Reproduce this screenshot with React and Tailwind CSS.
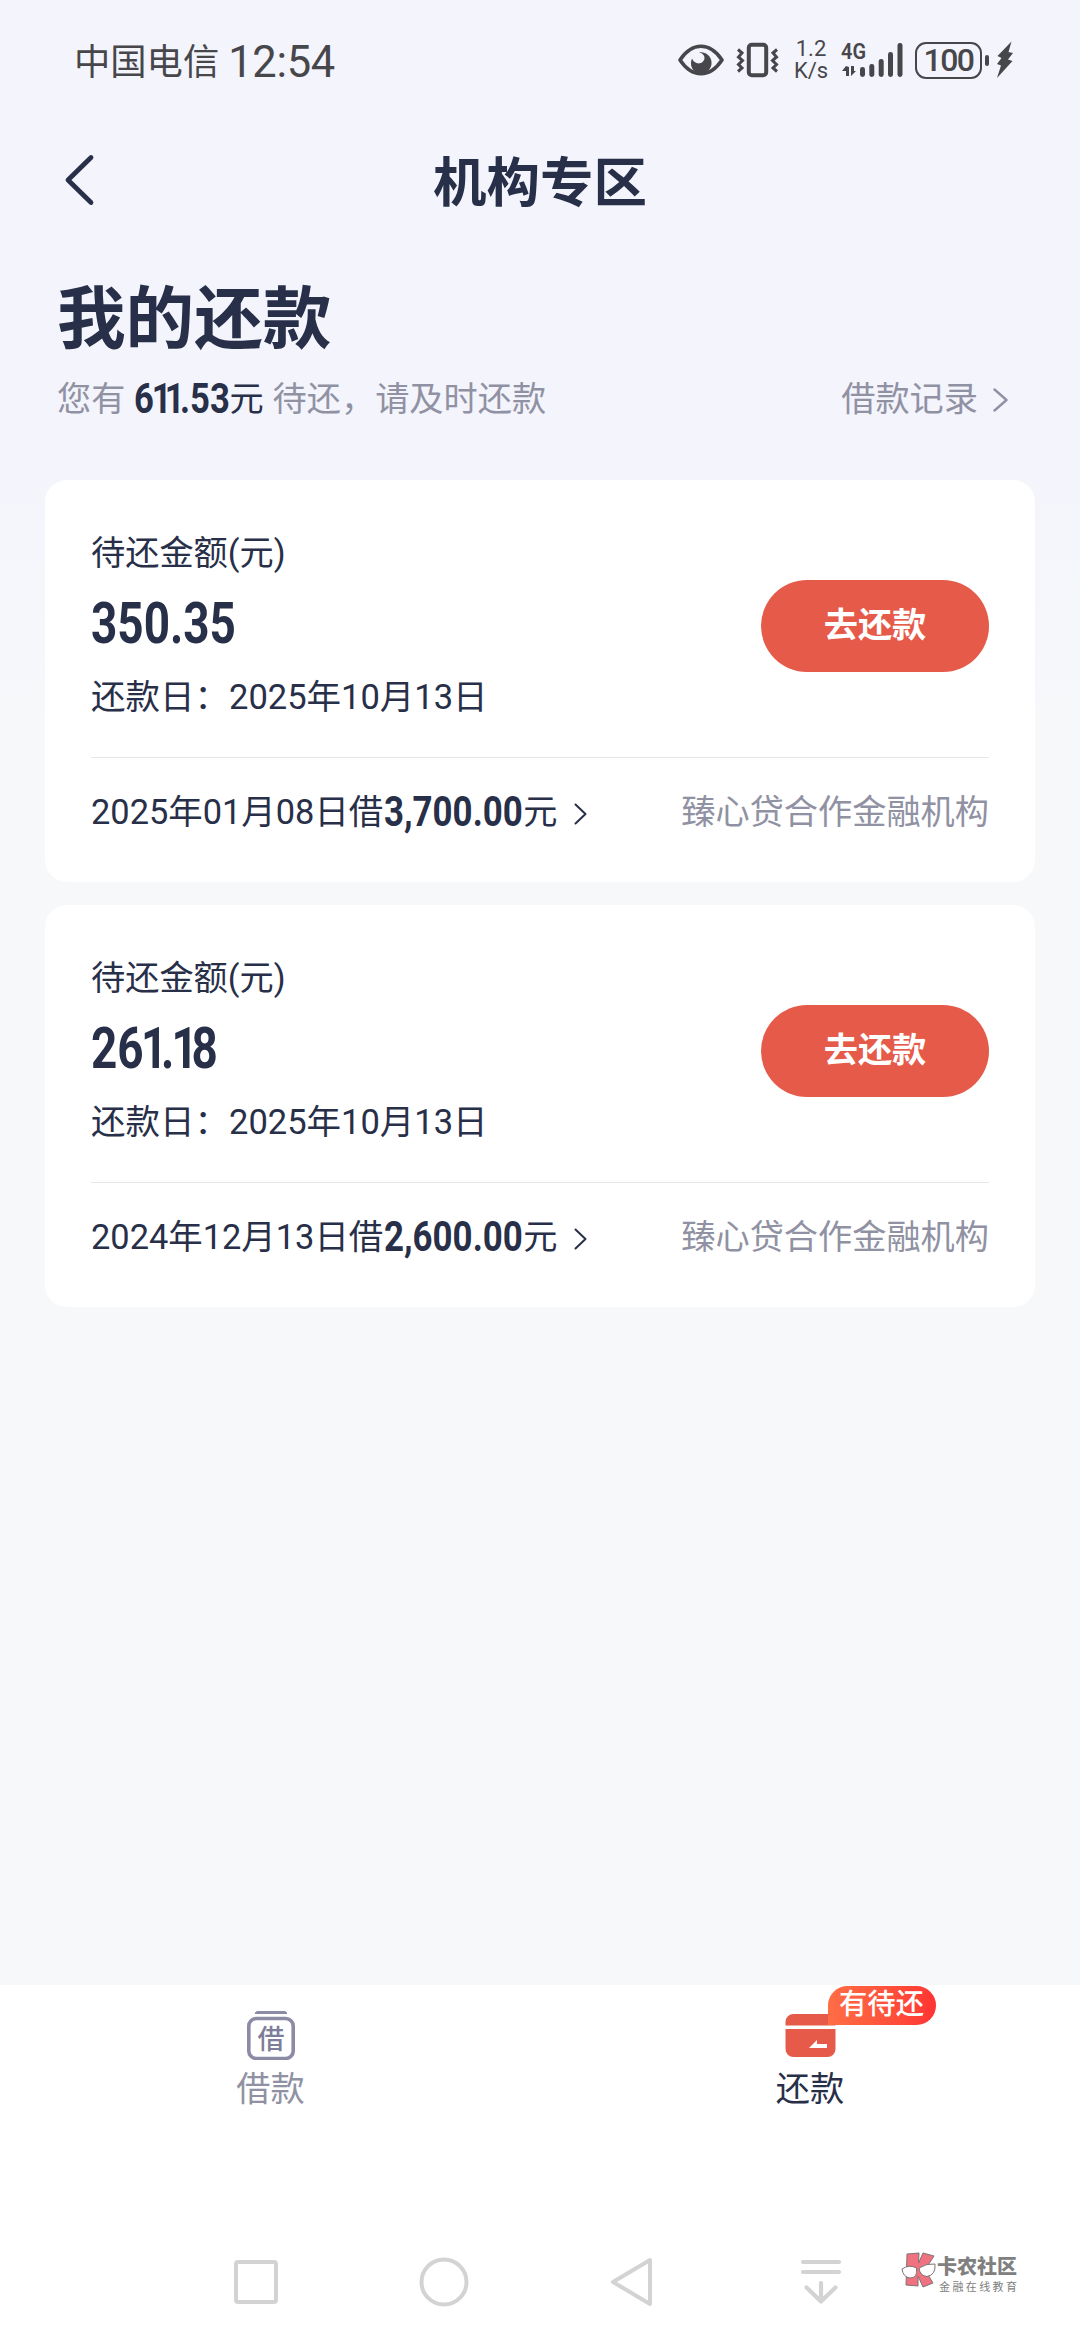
function Chevron({ w, h, color, stroke }) {
  return (
    <svg width={w} height={h} viewBox={`0 0 ${w} ${h}`} fill="none" stroke={color} strokeWidth={stroke} strokeLinecap="round" strokeLinejoin="round">
      <path d={`M1.5 1.5 L${w - 1.5} ${h / 2} L1.5 ${h - 1.5}`} />
    </svg>
  );
}

// Condensed bold figures; the digit 1 is set tighter than the others.
function Figures({ value, className }) {
  const spacing = (i) => {
    if (value[i] === "1") return value[i + 1] === "1" ? "tracking-[-0.197em]" : "tracking-[-0.137em]";
    return value[i + 1] === "1" ? "tracking-[-0.06em]" : "";
  };
  return (
    <span className={`inline-block origin-left whitespace-nowrap font-bold ${className}`}>
      {value.split("").map((ch, i) => (
        <span key={i} className={spacing(i)}>{ch}</span>
      ))}
    </span>
  );
}

function StatusBar() {
  const c = "#47474b";
  return (
    <div className="flex h-[120px] items-center pl-[74px] pr-[66px] text-[#47474b]">
      <span className="pt-[5px] text-[36.3px] leading-[60px]">中国电信</span>
      <span className="ml-[9px] pt-[5px] text-[43.5px] leading-[60px] tracking-[-0.3px]">12:54</span>
      <div className="ml-auto flex items-center">
        <svg width="46" height="32" viewBox="0 0 46 32">
          <path d="M2 16C8 7 15 2.300 23 2.300S38 7 44 16C38 25 31 29.700 23 29.700S8 25 2 16Z" fill="none" stroke={c} strokeWidth="3.600" strokeLinejoin="round" />
          <path d="M21 8.500C27 9.500 28 15 24.500 18C21 21 15.500 19 14 14.500C11 21 14.500 29 23 29C30 29 34 24 33.500 18C33 11.500 27 7.500 21 8.500Z" fill={c} />
        </svg>
        <svg className="ml-[12px]" width="43" height="36" viewBox="0 0 43 36" fill="none" stroke={c}>
          <rect x="12.800" y="2.800" width="17.400" height="30.400" rx="3" strokeWidth="4" />
          <path d="M2 7.500 L6 11 L2.500 15 L6.500 18.500 L2.500 22.500 L6 26 L2 29.500 M41 7.500 L37 11 L40.500 15 L36.500 18.500 L40.500 22.500 L37 26 L41 29.500" strokeWidth="3" />
        </svg>
        <div className="ml-[15px] flex w-[34px] flex-col items-center text-[22px] leading-[22px]">
          <span>1.2</span>
          <span>K/s</span>
        </div>
        <div className="ml-[13px] flex h-[36px] w-[63px]">
          <svg className="overflow-visible" width="63" height="36" viewBox="0 0 63 36" fill={c}>
            <text x="0" y="17" fontSize="22" fontWeight="600" fontFamily="Roboto" textLength="25" lengthAdjust="spacingAndGlyphs">4G</text>
            <path d="M5 25V34H8V25L5 24L1 29H5ZM10 24V34L15 29H13V24Z" />
            <rect x="19" y="25" width="5" height="10" rx="2.400" />
            <rect x="28.300" y="22" width="5" height="13" rx="2.400" />
            <rect x="37.700" y="17" width="5" height="18" rx="2.400" />
            <rect x="47" y="10" width="5" height="25" rx="2.400" />
            <rect x="56.500" y="1" width="5" height="34" rx="2.400" />
          </svg>
        </div>
        <div className="ml-[11px] flex h-[37px] w-[67px] items-center justify-center rounded-[11px] border-[2.500px] border-[#47474b]">
          <span className="text-[32px] font-medium leading-none tracking-[-1.500px]">100</span>
        </div>
        <div className="ml-[3px] h-[11px] w-[4px] rounded-full bg-[#47474b]" />
        <svg className="ml-[7px]" width="18" height="38" viewBox="0 0 18 38" fill={c}>
          <path d="M15.500 0.500L1.500 15L5.500 17L1 23L5 24.500L1 37L16.500 20L12 18.500L17 12L12.500 11Z" />
        </svg>
      </div>
    </div>
  );
}

function LoanCard({ amount, date, principal }) {
  return (
    <section className="flex h-[402px] flex-col rounded-[22px] bg-white px-[46px]">
      <div className="flex h-[278px] items-center justify-between border-b border-[#e6e7ea]">
        <div className="flex flex-col pt-[12px]">
          <span className="text-[34.200px] leading-[52px]">待还金额(元)</span>
          <span className="mb-[8px] mt-[6px] flex h-[78px] items-center text-[57px] leading-none">
            <Figures value={amount} className="scale-x-[0.805]" />
          </span>
          <span className="text-[34.500px] leading-[52px]">还款日：2025年10月13日</span>
        </div>
        <button className="mt-[15px] h-[92px] w-[228px] rounded-full bg-[#e65a49] text-[34.200px] font-bold text-white">去还款</button>
      </div>
      <div className="flex h-[107px] items-center text-[34.200px] leading-[52px]">
        <span className="text-[34.400px]">{date}</span>
        <span className="ml-px flex w-[139px] items-center text-[42px] leading-[52px]">
          <Figures value={principal} className="scale-x-[0.83]" />
        </span>
        <span>元</span>
        <span className="ml-[17px] pt-[5px]"><Chevron w={13} h={22} color="#282f48" stroke={2} /></span>
        <span className="ml-auto text-[#9092a3]">臻心贷合作金融机构</span>
      </div>
    </section>
  );
}

function BottomTabs() {
  return (
    <nav className="grid h-[240px] grid-cols-2 bg-white text-[34.200px] leading-[50px]">
      <div className="flex flex-col items-center pl-px pt-[24px] text-[#9092a3]">
        <svg width="50" height="51" viewBox="0 0 50 51" fill="none">
          <path d="M9 3.500L11 2H39L41 3.500V5H9Z" fill="#8c8ba5" />
          <rect x="2.800" y="9.500" width="44.400" height="40" rx="7.500" stroke="#8c8ba5" strokeWidth="3.600" />
          <text x="25" y="39.500" fontSize="27" fontWeight="500" fill="#7d7e99" textAnchor="middle" fontFamily="Noto Sans CJK SC">借</text>
        </svg>
        <span className="mt-[4px]">借款</span>
      </div>
      <div className="flex flex-col items-center pt-[24px]">
        <div className="relative">
          <svg width="51" height="51" viewBox="0 0 51 51" fill="#e65a49">
            <path d="M0.500 16.500V13A8 8 0 0 1 8.500 5H42.500A8 8 0 0 1 50.500 13V16.500Z" />
            <path d="M0.500 20H50.500V40A8 8 0 0 1 42.500 48H8.500A8 8 0 0 1 0.500 40Z" />
            <path d="M24 39L32 31V35H42V39Z" fill="white" />
          </svg>
          <span className="absolute -top-[23px] left-[43px] flex h-[39px] w-[108px] items-center justify-center rounded-[20px] rounded-bl-none bg-gradient-to-r from-[#ff6d45] to-[#ff3333] text-[28.300px] font-medium leading-none text-white">有待还</span>
        </div>
        <span className="mt-[4px]">还款</span>
      </div>
    </nav>
  );
}

function SystemNav() {
  return (
    <div className="flex h-[115px] items-start bg-white pl-[232px] pt-[30px]">
      <svg width="48" height="54" viewBox="0 0 48 54" fill="none" stroke="#d3d3d3" strokeWidth="4">
        <rect x="4" y="7" width="40" height="40" rx="2" />
      </svg>
      <svg className="ml-[139px]" width="50" height="54" viewBox="0 0 50 54" fill="none" stroke="#d3d3d3" strokeWidth="4">
        <circle cx="25" cy="27" r="22.500" />
      </svg>
      <svg className="ml-[139px]" width="48" height="54" viewBox="0 0 48 54" fill="none" stroke="#d3d3d3" strokeWidth="4" strokeLinejoin="round">
        <path d="M5 27L42 5V49Z" />
      </svg>
      <svg className="ml-[141px]" width="48" height="54" viewBox="0 0 48 54" fill="none" stroke="#d3d3d3" strokeWidth="4.200" strokeLinecap="round" strokeLinejoin="round">
        <path d="M6 7H42M6 17H42M24 28V46M9.500 32.500L24 46.500L38.500 32.500" />
      </svg>
      <svg className="-mt-[5px] ml-[56px]" width="36" height="40" viewBox="0 0 36 40" stroke="#7d7476" strokeWidth="1">
        <path d="M6 4L18 3L17.500 13L22 3L33 6L24 20L32 33L22 37L17 26V36L5 35Z" fill="#f0717f" />
        <path d="M1 19Q8 14 15.500 18Q17 28 9 28Q2 27 1 19ZM18 18Q26 13 34 14Q35 25 26 26.500Q19 26 18 18Z" fill="white" />
      </svg>
      <div className="flex flex-col text-[#808080]">
        <span className="text-[20px] font-black leading-[24px]">卡农社区</span>
        <span className="ml-[2px] mt-[2px] text-[11px] leading-[14px] tracking-[2.400px]">金融在线教育</span>
      </div>
    </div>
  );
}

export default function App() {
  return (
    <div className="flex h-[2340px] w-[1080px] flex-col overflow-hidden bg-[#f7f8fa] font-['Roboto','Noto_Sans_CJK_SC',sans-serif] text-[#282f48]" lang="zh-CN">
      <div className="flex flex-1 flex-col bg-gradient-to-b from-[#f3f4fc] from-[20%] to-[#f7f8fa] to-[36%]">
        <StatusBar />
        <header className="grid h-[120px] grid-cols-[1fr_auto_1fr] items-center px-[64px]">
          <svg width="32" height="54" viewBox="0 0 32 54" fill="none" stroke="#282f48" strokeWidth="4.800" strokeLinecap="round" strokeLinejoin="round">
            <path d="M27 4.500L4 27L27 49.500" />
          </svg>
          <h1 className="pt-[7px] text-[53.500px] font-bold leading-[80px]">机构专区</h1>
        </header>
        <div className="px-[57px] pt-[28px]">
          <h2 className="text-[68.600px] font-bold leading-[104px]">我的还款</h2>
          <div className="mt-[1px] flex items-center text-[34.200px] leading-[52px] text-[#9092a3]">
            <span>您有</span>
            <span className="ml-[9px] flex w-[95px] items-center text-[42px] text-[#282f48]">
              <Figures value="611.53" className="scale-x-[0.825]" />
            </span>
            <span className="text-[#282f48]">元</span>
            <span className="ml-[9px]">待还，请及时还款</span>
            <span className="ml-auto mr-[15px]">借款记录</span>
            <span className="mr-[15px] pt-[2px]"><Chevron w={15} h={24} color="#9092a3" stroke={2.4} /></span>
          </div>
        </div>
        <main className="mt-[55px] flex flex-col gap-[23px] px-[45px]">
          <LoanCard amount="350.35" date="2025年01月08日借" principal="3,700.00" />
          <LoanCard amount="261.18" date="2024年12月13日借" principal="2,600.00" />
        </main>
      </div>
      <BottomTabs />
      <SystemNav />
    </div>
  );
}
